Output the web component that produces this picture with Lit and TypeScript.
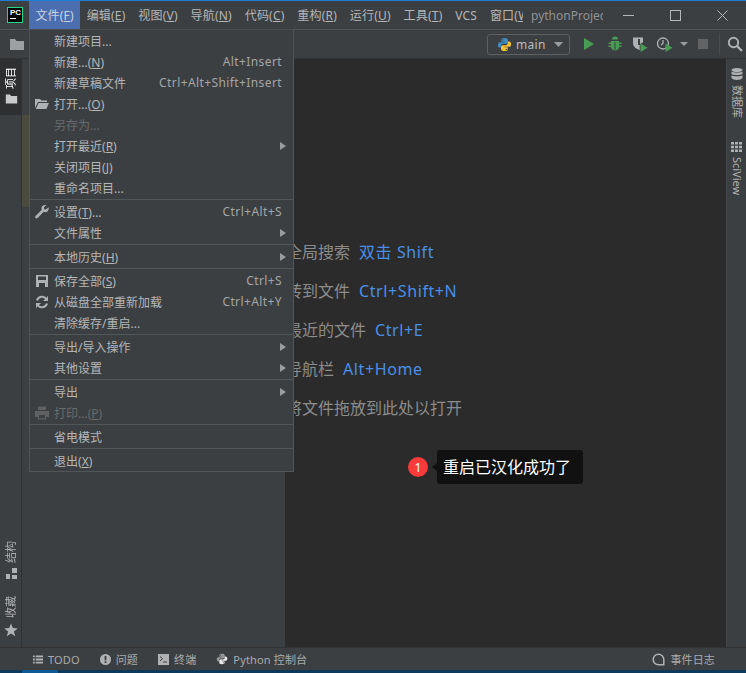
import { LitElement, html, css, svg } from 'lit';
import { customElement } from 'lit/decorators.js';

type MenuRow = { label: string; key?: string; icon?: string; arrow?: boolean; off?: boolean };

const TOP_MENU = ['文件(F)', '编辑(E)', '视图(V)', '导航(N)', '代码(C)', '重构(R)', '运行(U)', '工具(T)', 'VCS', '窗口(W)'];

const GROUPS: MenuRow[][] = [
  [
    { label: '新建项目...' },
    { label: '新建...(N)', key: 'Alt+Insert' },
    { label: '新建草稿文件', key: 'Ctrl+Alt+Shift+Insert' },
    { label: '打开...(O)', icon: 'open' },
    { label: '另存为...', off: true },
    { label: '打开最近(R)', arrow: true },
    { label: '关闭项目(J)' },
    { label: '重命名项目...' },
  ],
  [
    { label: '设置(T)...', key: 'Ctrl+Alt+S', icon: 'wrench' },
    { label: '文件属性', arrow: true },
  ],
  [{ label: '本地历史(H)', arrow: true }],
  [
    { label: '保存全部(S)', key: 'Ctrl+S', icon: 'save' },
    { label: '从磁盘全部重新加载', key: 'Ctrl+Alt+Y', icon: 'reload' },
    { label: '清除缓存/重启...' },
  ],
  [
    { label: '导出/导入操作', arrow: true },
    { label: '其他设置', arrow: true },
  ],
  [
    { label: '导出', arrow: true },
    { label: '打印...(P)', icon: 'print', off: true },
  ],
  [{ label: '省电模式' }],
  [{ label: '退出(X)' }],
];

const HINTS = [
  { text: '全局搜索', key: '双击 Shift' },
  { text: '转到文件', key: 'Ctrl+Shift+N' },
  { text: '最近的文件', key: 'Ctrl+E' },
  { text: '导航栏', key: 'Alt+Home' },
  { text: '将文件拖放到此处以打开', key: '' },
];

const folder = svg`<path fill="currentColor" d="M1 3h5l1.500 2H15v9H1z"/>`;
const python = svg`
  <path fill="#3c8cc4" d="M7.900 1C5 1 4.600 2 4.600 3.200V5h3.500v.6H3.200C1.900 5.600 1 6.600 1 8.400c0 1.900.9 2.900 2.100 2.900h1.300V9.500c0-1.300 1-2.300 2.300-2.300h3.100c1.100 0 1.900-.9 1.900-1.900V3.200C11.700 1.800 10.500 1 7.900 1zM6 2.200a.7.7 0 1 1 0 1.400.7.7 0 0 1 0-1.400z"/>
  <path fill="#f2c233" d="M8.100 15c2.900 0 3.300-1 3.300-2.200V11H7.900v-.6h4.900c1.300 0 2.200-1 2.200-2.800 0-1.900-.9-2.900-2.100-2.900h-1.300v1.800c0 1.300-1 2.300-2.300 2.300H6.200c-1.100 0-1.900.9-1.900 1.900v2.100C4.300 14.200 5.500 15 8.100 15zm1.900-1.200a.7.7 0 1 1 0-1.400.7.7 0 0 1 0 1.400z"/>`;

const ICONS: Record<string, unknown> = {
  open: svg`<path fill="#afb1b3" d="M1 3h5l1.300 1.600H13V6H4L1 12z"/><path fill="#afb1b3" d="M4.600 7H15l-2.600 6H1.800z"/>`,
  wrench: svg`<path fill="#afb1b3" d="M14.500 3.200 12 5.600 10.300 5.200 9.900 3.500 12.400 1.100C10.500.5 8.400 1.200 7.700 3c-.4 1-.3 2 .1 2.800L1.600 12c-.6.600-.6 1.500 0 2 .6.600 1.400.6 2 0l6.200-6.200c.9.400 1.900.5 2.800.1 1.800-.8 2.500-2.800 1.900-4.700z"/>`,
  save: svg`<path fill="#afb1b3" fill-rule="evenodd" d="M2 2h12v12H2zM4 3.500V7h8V3.500zM5 10v4h6v-4z"/>`,
  reload: svg`<path fill="none" stroke="#afb1b3" stroke-width="2" d="M3 6.500A5.200 5.200 0 0 1 12.300 5M13 9.500A5.200 5.200 0 0 1 3.700 11"/><path fill="#afb1b3" d="M14 2v5H9zM2 14V9h5z"/>`,
  print: svg`<path fill="#5e6062" fill-rule="evenodd" d="M4 1.500h8V5H4zM1 6h14v6h-3v2.500H4V12H1zM5 10v3.200h6V10z"/>`,
};

function withMnemonic(label: string) {
  const m = label.match(/^(.*)\((.)\)(.*)$/);
  if (!m) return label;
  return html`${m[1]}(<u>${m[2]}</u>)${m[3]}`;
}

@customElement('app-root')
export class AppRoot extends LitElement {
  static styles = css`
    :host {
      display: flex;
      flex-direction: column;
      position: relative;
      width: 746px;
      height: 673px;
      overflow: hidden;
      background: #3c3f41;
      color: #afb1b3;
      font: 12px 'Noto Sans', 'Noto Sans CJK SC', sans-serif;
    }
    svg { display: block; flex: none; }
    u { text-underline-offset: 1px; }

    .accent { height: 1px; flex: none; background: #1a7fd4; }

    .titlebar {
      height: 28px;
      flex: none;
      display: flex;
      align-items: center;
      background: #3c3f41;
      border-bottom: 1px solid #515658;
    }
    .logo {
      width: 16px;
      height: 16px;
      margin: 0 6px 0 7px;
      background: #000;
      border: 1px solid #21d789;
      color: #fff;
      font: 700 8px/9px 'Liberation Sans', sans-serif;
      display: flex;
      flex-direction: column;
      padding-left: 2px;
      box-sizing: border-box;
      flex: none;
    }
    .logo i { display: block; width: 6px; height: 1px; background: #fff; margin-top: 1px; }
    .topmenu { display: flex; width: 494px; overflow: hidden; flex: none; height: 28px; }
    .topitem {
      padding: 0 6.4px;
      display: flex;
      align-items: center;
      white-space: nowrap;
      letter-spacing: 0.2px;
      color: #b4b6b8;
      flex: none;
    }
    .topitem.on { background: #4b6eaf; color: #c9d2e4; }
    .project {
      width: 72px;
      margin-left: 8px;
      overflow: hidden;
      white-space: nowrap;
      color: #8f9193;
      flex: none;
    }
    .winbtns { display: flex; margin-left: auto; }
    .winbtn { width: 47px; display: flex; justify-content: center; align-items: center; height: 28px; }

    .toolbar {
      height: 28px;
      flex: none;
      display: flex;
      align-items: center;
      background: #3c3f41;
      border-bottom: 1px solid #323232;
      padding: 0 3px 0 9px;
    }
    .runconfig {
      margin-left: auto;
      width: 83px;
      height: 21px;
      box-sizing: border-box;
      border: 1px solid #5e6060;
      border-radius: 3px;
      display: flex;
      align-items: center;
      gap: 4px;
      padding-left: 9px;
      font-size: 12px;
      letter-spacing: 0.3px;
      color: #bbbbbb;
    }
    .tools { display: flex; align-items: center; margin-left: 13px; }
    .vsep { width: 1px; height: 22px; background: #4b4e50; }

    .main { flex: 1; display: flex; min-height: 0; }
    .stripe {
      flex: none;
      display: flex;
      flex-direction: column;
      align-items: center;
      background: #3c3f41;
      font-size: 11px;
    }
    .stripe.left { width: 21px; border-right: 1px solid #323232; }
    .stripe.right {
      width: 20px;
      padding-top: 9px;
      gap: 24px;
      border-left: 1px solid #45484a;
      box-sizing: border-box;
    }
    .tab {
      display: flex;
      flex-direction: column;
      align-items: center;
      box-sizing: border-box;
      width: 100%;
    }
    .tab.l { gap: 5px; padding-left: 1px; }
    .tab.r { gap: 5px; }
    .tab.active {
      background: #2d2f30;
      color: #fff;
      height: 56px;
      padding-top: 8px;
      gap: 3px;
    }
    .vl, .vr {
      writing-mode: vertical-rl;
      text-orientation: sideways;
      white-space: nowrap;
      line-height: 14px;
    }
    .vl { transform: rotate(180deg); }
    .bottomtabs {
      margin-top: auto;
      display: flex;
      flex-direction: column;
      gap: 17px;
      width: 100%;
      padding-bottom: 10px;
    }

    .panel { width: 263px; flex: none; background: #3c3f41; position: relative; }
    .sliver { position: absolute; left: 0; top: 56px; width: 8px; height: 92px; background: #4b4a3f; }

    .editor {
      flex: 1;
      background: #2b2b2b;
      padding-top: 182px;
      font-size: 16px;
      color: #8c8c8c;
      display: flex;
      flex-direction: column;
      gap: 15.5px;
      position: relative;
    }
    .hint { line-height: 23.5px; white-space: nowrap; padding-left: 1px; display: flex; gap: 9px; }
    .hint b { font-weight: 400; color: #4a8fe7; letter-spacing: 0.6px; }

    .notice {
      position: absolute;
      left: 123px;
      top: 391px;
      display: flex;
      align-items: center;
      gap: 9px;
    }
    .badge {
      width: 20px;
      height: 20px;
      border-radius: 50%;
      background: #f93a3a;
      color: #fff;
      font-size: 13px;
      display: flex;
      align-items: center;
      justify-content: center;
    }
    .tip {
      position: relative;
      background: #111111;
      color: #fff;
      font-size: 16px;
      line-height: 34px;
      padding: 0 12px 0 6px;
      border-radius: 3px;
      white-space: nowrap;
    }
    .tip::before {
      content: '';
      position: absolute;
      left: -5px;
      top: 13px;
      border: 4px solid transparent;
      border-left: 0;
      border-right: 5px solid #111111;
    }

    .statusbar {
      height: 22px;
      flex: none;
      display: flex;
      align-items: center;
      background: #3c3f41;
      border-top: 1px solid #323232;
      padding-left: 33px;
      font-size: 11px;
      letter-spacing: 0.15px;
      color: #a9abad;
    }
    .stat { display: flex; align-items: center; gap: 5px; white-space: nowrap; margin-right: 20px; }
    .stat.end { margin-left: auto; margin-right: 31px; }

    .taskbar { height: 3px; flex: none; background: #0d3a5c; padding-left: 22px; }
    .taskbar i { display: block; width: 36px; height: 3px; background: #0f5a94; }

    .menu {
      position: absolute;
      left: 29px;
      top: 29px;
      width: 265px;
      box-sizing: border-box;
      background: #3c3f41;
      border: 1px solid #515658;
      border-top-color: #4a4d4f;
      z-index: 5;
    }
    .group + .group { border-top: 1px solid #515658; margin-top: 1px; padding-top: 1px; }
    .row {
      height: 21px;
      box-sizing: border-box;
      padding: 0 11px 0 24px;
      display: flex;
      align-items: center;
      position: relative;
      white-space: nowrap;
      color: #b4b6b8;
    }
    .row.off { color: #686a6c; }
    .row .ic { position: absolute; left: 4px; top: 3px; }
    .row .key { margin-left: auto; color: #a3a5a7; letter-spacing: 0.4px; }
    .row .arrow {
      margin-left: auto;
      margin-right: -4px;
      border-left: 6px solid #9a9c9e;
      border-top: 4px solid transparent;
      border-bottom: 4px solid transparent;
    }
  `;

  private renderRow(r: MenuRow) {
    return html`<div class="row ${r.off ? 'off' : ''}">
      ${r.icon ? html`<svg class="ic" width="16" height="16" viewBox="0 0 16 16">${ICONS[r.icon]}</svg>` : ''}
      <span>${withMnemonic(r.label)}</span>
      ${r.key ? html`<span class="key">${r.key}</span>` : ''}
      ${r.arrow ? html`<span class="arrow"></span>` : ''}
    </div>`;
  }

  render() {
    return html`
      <div class="accent"></div>
      <div class="titlebar">
        <div class="logo">PC<i></i></div>
        <div class="topmenu">
          ${TOP_MENU.map((m, i) => html`<div class="topitem ${i === 0 ? 'on' : ''}">${withMnemonic(m)}</div>`)}
        </div>
        <div class="project">pythonProject</div>
        <div class="winbtns">
          <div class="winbtn"><svg width="11" height="11" viewBox="0 0 11 11"><path stroke="#b4b6b8" d="M0 5.500h11"/></svg></div>
          <div class="winbtn"><svg width="11" height="11" viewBox="0 0 11 11"><rect x=".5" y=".5" width="10" height="10" fill="none" stroke="#b4b6b8"/></svg></div>
          <div class="winbtn"><svg width="11" height="11" viewBox="0 0 11 11"><path stroke="#b4b6b8" d="M.5.5l10 10M10.500.5l-10 10"/></svg></div>
        </div>
      </div>
      <div class="toolbar">
        <svg width="16" height="16" viewBox="0 0 16 16" style="color:#9da0a2">${folder}</svg>
        <div class="runconfig">
          <svg width="15" height="15" viewBox="0 0 16 16">${python}</svg>
          <span>main</span>
          <svg style="margin-left:4px" width="9" height="5" viewBox="0 0 9 5"><path fill="#9a9c9e" d="M0 0h9L4.500 5z"/></svg>
        </div>
        <div class="tools">
          <svg width="12" height="14" viewBox="0 0 12 14"><path fill="#499c54" d="M1 1l10 6-10 6z"/></svg>
          <svg style="margin-left:12px" width="16" height="16" viewBox="0 0 16 16"><path fill="#499c54" d="M5 3.500a3 3 0 0 1 6 0zM4 5h8v1.500h2.500V8H12v1.500h2.500V11H12c0 2-2 3.500-4 3.500S4 13 4 11H1.500V9.500H4V8H1.500V6.500H4z"/><path stroke="#3c3f41" d="M8 6v8"/></svg>
          <svg style="margin-left:8px" width="17" height="16" viewBox="0 0 17 16"><path fill="#afb1b3" d="M2 1.500h10v5c-3 .5-4 3-3 7.500-3.500-1-7-3-7-7z"/><path fill="#3c3f41" d="M7 3h2v6H7z"/><path fill="#499c54" d="M9.500 7.500l7 4.250-7 4.250z"/></svg>
          <svg style="margin-left:8px" width="17" height="16" viewBox="0 0 17 16"><circle cx="7" cy="7.500" r="5.500" fill="none" stroke="#afb1b3" stroke-width="1.300"/><path stroke="#afb1b3" stroke-width="1.300" fill="none" d="M7 4v3.500l-2 1.500"/><path fill="#499c54" d="M9.500 7.500l7 4.250-7 4.250z"/></svg>
          <svg style="margin-left:7px" width="8" height="4" viewBox="0 0 8 4"><path fill="#9a9c9e" d="M0 0h8L4 4z"/></svg>
          <svg style="margin-left:10px" width="10" height="10" viewBox="0 0 10 10"><rect width="10" height="10" fill="#616364"/></svg>
          <div class="vsep" style="margin-left:11px"></div>
          <svg style="margin-left:7px" width="16" height="16" viewBox="0 0 16 16"><circle cx="6.500" cy="6.500" r="4.700" fill="none" stroke="#afb1b3" stroke-width="1.900"/><path stroke="#afb1b3" stroke-width="2.400" d="M10 10l5 5"/></svg>
        </div>
      </div>
      <div class="main">
        <div class="stripe left">
          <div class="tab l active">
            <span class="vl">项目</span>
            <svg width="13" height="13" viewBox="0 0 16 16" style="color:#c8cacb">${folder}</svg>
          </div>
          <div class="bottomtabs">
            <div class="tab l">
              <span class="vl">结构</span>
              <svg width="11" height="11" viewBox="0 0 11 11"><path fill="#afb1b3" d="M6 0h5v5H6zM0 6h4v5H0zM6 7h5v4H6z"/></svg>
            </div>
            <div class="tab l">
              <span class="vl">收藏</span>
              <svg width="14" height="14" viewBox="0 0 14 14"><path fill="#afb1b3" d="M7 .5l1.800 4.600 4.900.3-3.800 3.100 1.300 4.800L7 10.600l-4.200 2.700 1.300-4.800L.3 5.400l4.900-.3z"/></svg>
            </div>
          </div>
        </div>
        <div class="panel"><div class="sliver"></div></div>
        <div class="editor">
          ${HINTS.map(h => html`<div class="hint"><span>${h.text}</span>${h.key ? html`<b>${h.key}</b>` : ''}</div>`)}
          <div class="notice">
            <div class="badge">1</div>
            <div class="tip">重启已汉化成功了</div>
          </div>
        </div>
        <div class="stripe right">
          <div class="tab r">
            <svg width="12" height="12" viewBox="0 0 12 12"><ellipse cx="6" cy="2" rx="5.500" ry="2" fill="#afb1b3"/><path fill="#afb1b3" d="M.5 3.500c1.500 1.300 9.500 1.300 11 0V6c-1.500 1.300-9.500 1.300-11 0zM.5 7.300c1.500 1.300 9.500 1.300 11 0V10c-1.500 2.600-9.500 2.600-11 0z"/></svg>
            <span class="vr">数据库</span>
          </div>
          <div class="tab r">
            <svg width="11" height="10" viewBox="0 0 11 10"><path fill="#afb1b3" d="M0 0h3v2.500H0zM4 0h3v2.500H4zM8 0h3v2.500H8zM0 3.700h3v2.500H0zM4 3.700h3v2.500H4zM8 3.700h3v2.500H8zM0 7.400h3V10H0zM4 7.400h3V10H4zM8 7.400h3V10H8z"/></svg>
            <span class="vr">SciView</span>
          </div>
        </div>
      </div>
      <div class="statusbar">
        <div class="stat">
          <svg width="10" height="9" viewBox="0 0 11 9"><path fill="#afb1b3" d="M0 0h2v2H0zM3 0h8v2H3zM0 3.500h2v2H0zM3 3.500h8v2H3zM0 7h2v2H0zM3 7h8v2H3z"/></svg>
          TODO
        </div>
        <div class="stat">
          <svg width="11" height="11" viewBox="0 0 11 11"><circle cx="5.500" cy="5.500" r="5.500" fill="#afb1b3"/><path fill="#3c3f41" d="M4.600 2h1.800v4.200H4.600zM4.600 7.200h1.800V9H4.600z"/></svg>
          问题
        </div>
        <div class="stat">
          <svg width="11" height="11" viewBox="0 0 11 11"><path fill="#afb1b3" d="M0 0h11v11H0z"/><path fill="none" stroke="#3c3f41" d="M2 2.500l2.500 2.200L2 7M5 8h4"/></svg>
          终端
        </div>
        <div class="stat">
          <svg width="12" height="12" viewBox="0 0 16 16" style="filter:grayscale(1) brightness(1.2)">${python}</svg>
          Python 控制台
        </div>
        <div class="stat end">
          <svg width="13" height="13" viewBox="0 0 13 13"><path fill="none" stroke="#afb1b3" stroke-width="1.500" d="M11.800 11.800H6.500a5.300 5.300 0 1 1 5.300-5.300z"/></svg>
          事件日志
        </div>
      </div>
      <div class="taskbar"><i></i></div>
      <div class="menu">
        ${GROUPS.map(g => html`<div class="group">${g.map(r => this.renderRow(r))}</div>`)}
      </div>
    `;
  }
}
